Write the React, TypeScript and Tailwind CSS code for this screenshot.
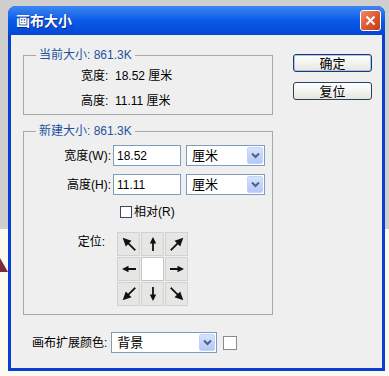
import React from "react";

const font = "font-['Liberation_Sans','Noto_Sans_CJK_SC',sans-serif]";

const Arrow = ({ rotate, diag }: { rotate: number; diag?: boolean }) => (
    <svg width="18" height="18" viewBox="0 0 18 18" style={{ transform: `rotate(${rotate}deg)` }}>
        <line x1="9" y1={diag ? 18 : 16} x2="9" y2="7" stroke="#111" strokeWidth="1.8" />
        <polygon points={diag ? "9,0 5,8.5 13,8.5" : "9,2 5.8,8.5 12.2,8.5"} fill="#111" />
    </svg>
);

const Select = ({ value, width }: { value: string; width: string }) => (
    <div className={`${width} h-[21px] flex items-center justify-between bg-white border border-[#7f9db9] pl-[5px] pr-px`}>
        <span className="text-[13px] text-black leading-none">{value}</span>
        <div className="w-[16px] h-[17px] rounded-[2px] bg-gradient-to-b from-[#d6e3fd] to-[#b4c8f6] border border-[#c3d3fd] flex items-center justify-center">
            <svg width="9" height="7" viewBox="0 0 9 7">
                <polyline points="1,1.5 4.5,5 8,1.5" fill="none" stroke="#4d6185" strokeWidth="2" />
            </svg>
        </div>
    </div>
);

const Button = ({ label, primary }: { label: string; primary?: boolean }) => (
    <button
        className={`w-[79px] h-[18px] rounded-[3px] border ${primary ? 'border-[#1f3a66] shadow-[inset_0_0_0_1px_#aac4ee]' : 'border-[#2b3f5f]'} bg-gradient-to-b from-white to-[#e6e6df] text-[13px] leading-none text-black flex items-center justify-center`}
    >
        {label}
    </button>
);

export default function App() {
    const arrows: (number | null)[] = [-45, 0, 45, -90, null, 90, -135, 180, 135];

    return (
        <div className={`w-[389px] h-[376px] overflow-hidden flex bg-[linear-gradient(to_bottom,#cfcfcf_61%,#fbfaf1_61%)] ${font} text-[12px] text-black`}>
            {/* left strip */}
            <div className="w-[8px] pt-[258px] shrink-0">
                <svg width="8" height="14" viewBox="0 0 8 14">
                    <polygon points="0,0 8,14 0,14" fill="#7a2a3a" />
                </svg>
            </div>

            {/* window */}
            <div className="mt-[6px] w-[377px] h-[365px] flex flex-col rounded-t-[8px] bg-[#0a3ed0] overflow-hidden shrink-0">
                <div className="h-[29px] shrink-0 flex items-center justify-between pl-[8px] pr-[4px] bg-gradient-to-b from-[#3d86f2] via-[#0a5ae8] to-[#0347d4]">
                    <span className="text-white font-bold text-[14px] [text-shadow:1px_1px_0_#0a2a8a] leading-none">画布大小</span>
                    <div className="w-[21px] h-[21px] rounded-[3px] border border-white bg-gradient-to-br from-[#ec8a6a] via-[#df5a32] to-[#c13c18] flex items-center justify-center">
                        <svg width="11" height="11" viewBox="0 0 11 11">
                            <line x1="1.5" y1="1.5" x2="9.5" y2="9.5" stroke="white" strokeWidth="2" />
                            <line x1="9.5" y1="1.5" x2="1.5" y2="9.5" stroke="white" strokeWidth="2" />
                        </svg>
                    </div>
                </div>

                <div className="flex-1 mx-[3px] mb-[3px] bg-[#efefef] flex">
                    {/* left column */}
                    <div className="ml-[12px] w-[250px] flex flex-col">
                        <fieldset className="mt-[13px] border border-[#a9a9a9] px-0 pb-[6px]">
                            <legend className="ml-[12px] px-[3px] text-[#24519e] leading-[14px]">当前大小: 861.3K</legend>
                            <div className="pl-[57px] pt-[7px] flex flex-col gap-[11px] leading-[14px]">
                                <span>宽度:&nbsp; 18.52 厘米</span>
                                <span>高度:&nbsp; 11.11 厘米</span>
                            </div>
                        </fieldset>

                        <fieldset className="mt-[9px] border border-[#a9a9a9] px-0 pb-[8px]">
                            <legend className="ml-[12px] px-[3px] text-[#24519e] leading-[14px]">新建大小: 861.3K</legend>
                            <div className="pt-[7px] flex flex-col">
                                <div className="flex items-center">
                                    <span className="w-[87px] text-right">宽度(W):</span>
                                    <div className="ml-[2px] w-[68px] h-[21px] border border-[#7f9db9] bg-white pl-[3px] flex items-center">18.52</div>
                                    <div className="ml-[5px]"><Select value="厘米" width="w-[79px]" /></div>
                                </div>
                                <div className="flex items-center mt-[8px]">
                                    <span className="w-[87px] text-right">高度(H):</span>
                                    <div className="ml-[2px] w-[68px] h-[21px] border border-[#7f9db9] bg-white pl-[3px] flex items-center">11.11</div>
                                    <div className="ml-[5px]"><Select value="厘米" width="w-[79px]" /></div>
                                </div>
                                <div className="flex items-center mt-[8px] pl-[96px] gap-[2px]">
                                    <div className="w-[12px] h-[12px] border border-[#3a4a5e] bg-white" />
                                    <span>相对(R)</span>
                                </div>
                                <div className="flex mt-[11px]">
                                    <span className="w-[81px] text-right pt-[1px]">定位:</span>
                                    <div className="ml-[12px] grid grid-cols-[repeat(3,23px)] grid-rows-[repeat(3,24px)] gap-px">
                                        {arrows.map((r, i) => (
                                            <div
                                                key={i}
                                                className={`flex items-center justify-center border ${r === null ? 'bg-white border-[#c4c4c4]' : 'bg-[#e6e6e4] border-[#d2d2d0]'}`}
                                            >
                                                {r !== null && <Arrow rotate={r} diag={r % 90 !== 0} />}
                                            </div>
                                        ))}
                                    </div>
                                </div>
                            </div>
                        </fieldset>

                        <div className="mt-[17px] ml-[9px] flex items-center">
                            <span>画布扩展颜色:</span>
                            <div className="ml-[4px]"><Select value="背景" width="w-[106px]" /></div>
                            <div className="ml-[6px] w-[14px] h-[14px] border border-[#8a8a8a] bg-white" />
                        </div>
                    </div>

                    {/* right column */}
                    <div className="ml-[20px] mt-[19px] flex flex-col gap-[10px]">
                        <Button label="确定" primary />
                        <Button label="复位" />
                    </div>
                </div>
            </div>
        </div>
    );
}
